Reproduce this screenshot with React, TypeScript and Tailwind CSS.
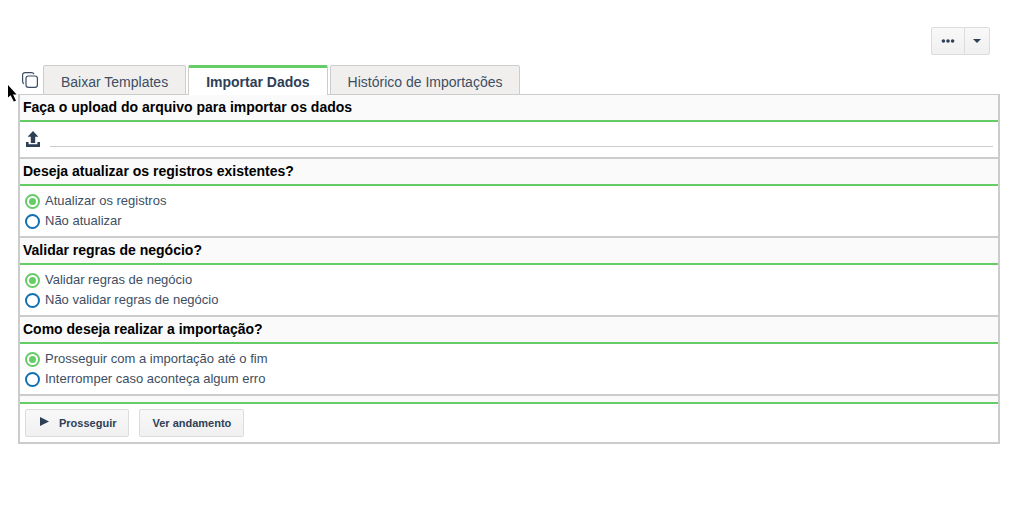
import { useState } from "react";
import clsx from "clsx";

const tabs = ["Baixar Templates", "Importar Dados", "Histórico de Importações"];

const questions = [
  {
    name: "atualizar",
    title: "Deseja atualizar os registros existentes?",
    options: ["Atualizar os registros", "Não atualizar"],
  },
  {
    name: "validar",
    title: "Validar regras de negócio?",
    options: ["Validar regras de negócio", "Não validar regras de negócio"],
  },
  {
    name: "modo",
    title: "Como deseja realizar a importação?",
    options: ["Prosseguir com a importação até o fim", "Interromper caso aconteça algum erro"],
  },
];

const buttonClass =
  "flex h-7 items-center justify-center rounded-xs border border-[#dcdcdc] bg-linear-to-b from-[#f8f8f8] to-[#f0f0f0] text-[11px] font-bold text-[#2f4056]";

const titleClass =
  "h-[27px] border-b-2 border-[#66cc66] bg-[#fafafa] px-[3px] text-sm leading-6 font-bold text-black";

function CopyIcon() {
  return (
    <svg viewBox="0 0 16 16" className="size-4" fill="none" stroke="#3d4e63" strokeWidth="1.2">
      <rect x="4" y="4" width="11.4" height="11.4" rx="2.4" />
      <path d="M2 11.6C1.1 11.2 .6 10.4 .6 9.4V3C.6 1.6 1.6 .6 3 .6H9.6C10.8 .6 11.6 1.2 12 2.2" />
    </svg>
  );
}

function UploadIcon() {
  return (
    <svg viewBox="0 0 14 16" className="h-4 w-3.5" fill="#2f4056">
      <path d="M7 0L12.4 5.8H9.2V12H4.8V5.8H1.6Z" />
      <path d="M0 11H2.6V13.2H11.4V11H14V16H0Z" />
    </svg>
  );
}

function Cursor() {
  return (
    <svg viewBox="0 0 9 17" className="absolute top-[85px] left-2 h-[17px] w-[9px]" fill="#000">
      <path d="M0 0V12.5L2.6 10.2L5.8 16.6L8 15.8L5 9.4H8.6Z" />
    </svg>
  );
}

export default function App() {
  const [active, setActive] = useState(1);

  return (
    <div className="relative bg-white font-['Liberation_Sans',Arial,sans-serif] text-[#3d4e63]">
      {/* Ações */}
      <div className="flex justify-end pt-[27px] pr-7">
        <button type="button" aria-label="Mais ações" className={clsx(buttonClass, "w-[34px] rounded-r-none")}>
          <svg viewBox="0 0 14 4" className="h-1 w-3.5" fill="#2f4056">
            <circle cx="2.4" cy="2" r="1.8" />
            <circle cx="7" cy="2" r="1.8" />
            <circle cx="11.6" cy="2" r="1.8" />
          </svg>
        </button>
        <button
          type="button"
          aria-label="Abrir menu"
          className={clsx(buttonClass, "-ml-px w-[26px] rounded-l-none")}
        >
          <svg viewBox="0 0 8 4" className="h-1 w-2" fill="#2f4056">
            <path d="M0 0H8L4 4Z" />
          </svg>
        </button>
      </div>

      {/* Abas */}
      <div className="mt-2.5 flex pl-[22px]">
        <button type="button" aria-label="Copiar" className="mt-[7px] mr-[5px] h-4">
          <CopyIcon />
        </button>
        <div role="tablist" className="-mb-px flex gap-0.5">
          {tabs.map((tab, i) => (
            <button
              key={tab}
              type="button"
              role="tab"
              aria-selected={active === i}
              onClick={() => setActive(i)}
              className={clsx(
                "relative h-[30px] rounded-t-xs border border-[#cccccc] px-[17px] text-sm",
                active === i
                  ? "border-t-[3px] border-b-0 border-t-[#66cc66] bg-white font-bold text-[#2f4056]"
                  : "bg-[#f0efee] pt-1"
              )}
            >
              {tab}
            </button>
          ))}
        </div>
      </div>

      {/* Formulário */}
      <form className="mx-[18px] border-2 border-t border-[#cccccc]" onSubmit={(e) => e.preventDefault()}>
        <section className="border-b-2 border-[#cccccc]">
          <h2 className={titleClass}>
            <label htmlFor="arquivo">Faça o upload do arquivo para importar os dados</label>
          </h2>
          <div className="flex h-[35px] gap-2.5 pt-[9px] pr-[5px] pl-1.5">
            <button type="button" aria-label="Enviar arquivo" className="h-4">
              <UploadIcon />
            </button>
            <input
              id="arquivo"
              type="text"
              className="h-4 min-w-0 flex-1 border-b border-[#cccccc] text-[13px] outline-none"
            />
          </div>
        </section>

        {questions.map((question) => (
          <fieldset key={question.name} aria-label={question.title} className="border-b-2 border-[#cccccc]">
            <h2 className={titleClass}>{question.title}</h2>
            <div className="py-[5px] pl-[5px]">
              {question.options.map((option, i) => (
                <label key={option} className="flex h-5 w-fit items-center gap-[5px] text-[13px]">
                  <input
                    type="radio"
                    name={question.name}
                    defaultChecked={i === 0}
                    className="size-[15px] appearance-none rounded-full border-2 border-[#0f70b7] bg-white bg-clip-content p-0.5 checked:border-[#66cc66] checked:bg-[#66cc66]"
                  />
                  {option}
                </label>
              ))}
            </div>
          </fieldset>
        ))}

        <div className="h-2 border-b-2 border-[#66cc66] bg-[#fafafa]" />
        <div className="flex gap-2.5 p-[5px]">
          <button type="submit" className={clsx(buttonClass, "gap-2.5 px-3")}>
            <svg viewBox="0 0 9 9" className="mb-1 ml-0.5 size-[9px]" fill="#2f4056">
              <path d="M0 0L9 4.5L0 9Z" />
            </svg>
            Prosseguir
          </button>
          <button type="button" className={clsx(buttonClass, "px-3")}>
            Ver andamento
          </button>
        </div>
      </form>

      <Cursor />
    </div>
  );
}
